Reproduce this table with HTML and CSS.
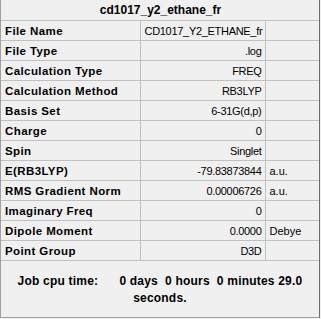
FILE: index.html
```html
<!DOCTYPE html>
<html lang="en">
<head>
    <meta charset="UTF-8">
    <title>Summary</title>
    <link rel="stylesheet" href="styles.css">
</head>
<body>
    <div class="panel">
        <table class="summary">
            <colgroup>
                <col class="col-key">
                <col class="col-val">
                <col>
            </colgroup>
            <tr>
                <th class="title" colspan="3">cd1017_y2_ethane_fr</th>
            </tr>
            <tr><td class="key">File Name</td><td class="val">CD1017_Y2_ETHANE_fr</td><td class="unit"></td></tr>
            <tr><td class="key">File Type</td><td class="val">.log</td><td class="unit"></td></tr>
            <tr><td class="key">Calculation Type</td><td class="val">FREQ</td><td class="unit"></td></tr>
            <tr><td class="key">Calculation Method</td><td class="val">RB3LYP</td><td class="unit"></td></tr>
            <tr><td class="key">Basis Set</td><td class="val">6-31G(d,p)</td><td class="unit"></td></tr>
            <tr><td class="key">Charge</td><td class="val">0</td><td class="unit"></td></tr>
            <tr><td class="key">Spin</td><td class="val">Singlet</td><td class="unit"></td></tr>
            <tr><td class="key">E(RB3LYP)</td><td class="val">-79.83873844</td><td class="unit">a.u.</td></tr>
            <tr><td class="key">RMS Gradient Norm</td><td class="val">0.00006726</td><td class="unit">a.u.</td></tr>
            <tr><td class="key">Imaginary Freq</td><td class="val">0</td><td class="unit"></td></tr>
            <tr><td class="key">Dipole Moment</td><td class="val">0.0000</td><td class="unit">Debye</td></tr>
            <tr><td class="key">Point Group</td><td class="val">D3D</td><td class="unit"></td></tr>
        </table>
        <div class="cpu">
            <p>Job cpu time:      0 days  0 hours  0 minutes 29.0<br>seconds.</p>
        </div>
    </div>
</body>
</html>
```

FILE: styles.css
```css
body {
    margin: 0;
    background-color: #f0f0f0;
    font-family: "Liberation Sans", Arial, sans-serif;
    font-size: 11px;
    color: #000;
}
.panel {
    width: 320px;
    height: 318px;
    border-left: 1px solid #a0a0a0;
    border-right: 1px solid #6d6d6d;
    border-bottom: 1px solid #a0a0a0;
    box-sizing: border-box;
    display: flex;
    flex-direction: column;
}
.summary {
    border-collapse: collapse;
    table-layout: fixed;
    width: 100%;
}
.col-key {
    width: 139px;
}
.col-val {
    width: 125px;
}
.summary th,
.summary td {
    height: 19px;
    padding: 0 3px 0 4px;
    border-bottom: 1px solid #c0c0c0;
    white-space: nowrap;
    overflow: hidden;
}
.summary .title {
    height: 20px;
    text-align: center;
    font-weight: bold;
    font-size: 12px;
}
.key {
    font-size: 11.5px;
    font-weight: bold;
    letter-spacing: 0.4px;
    border-right: 1px solid #c0c0c0;
}
.val {
    text-align: right;
    letter-spacing: -0.3px;
    border-right: 1px solid #c0c0c0;
}
.unit {
    text-align: left;
}
.cpu {
    flex: 1;
    display: flex;
    align-items: center;
    justify-content: center;
}
.cpu p {
    margin: 2px 0 0;
    text-align: center;
    font-size: 12px;
    font-weight: bold;
    white-space: pre;
    line-height: 17px;
    letter-spacing: 0.2px;
}
```
